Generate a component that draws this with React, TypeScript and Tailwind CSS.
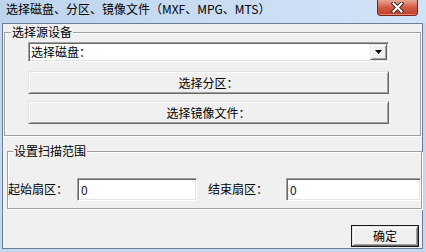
import React from "react";

const sunken =
  "border border-t-[#a0a0a0] border-l-[#a0a0a0] border-b-white border-r-white shadow-[inset_1px_1px_0_#696969,inset_-1px_-1px_0_#e3e3e3] bg-white";
const raised =
  "border border-t-[#e3e3e3] border-l-[#e3e3e3] border-b-[#696969] border-r-[#696969] shadow-[inset_1px_1px_0_#ffffff,inset_-1px_-1px_0_#a0a0a0] bg-[#f0f0f0]";

function CloseButton() {
  return (
    <div className="mr-[8px] w-[41px] h-[16px] rounded-b-[4px] border border-t-0 border-[#7a2418] bg-linear-to-b from-[#e7a595] via-[#d15a40] to-[#c0402a] shadow-[inset_0_-1px_0_#e08a70] flex items-center justify-center">
      <svg width="13" height="11" viewBox="0 0 13 11" className="-mt-[1px]">
        <path d="M2.5 1.5 L10.5 9.5 M10.5 1.5 L2.5 9.5" stroke="#3b2b2b" strokeWidth="4" strokeLinecap="square" />
        <path d="M2.5 1.5 L10.5 9.5 M10.5 1.5 L2.5 9.5" stroke="#ffffff" strokeWidth="2" strokeLinecap="square" />
      </svg>
    </div>
  );
}

export default function App() {
  return (
    <div className="w-[426px] h-[252px] overflow-hidden flex flex-col bg-[#c4d8ef] text-[12px] leading-[14px] text-black font-['Noto_Sans_CJK_SC','Microsoft_YaHei',sans-serif]">
      {/* Title bar */}
      <div className="h-[23px] shrink-0 flex items-start justify-between bg-linear-to-r from-[#bed4ee] to-[#d2e3f6]">
        <div className="pl-[6px] pt-[2px] whitespace-nowrap">选择磁盘、分区、镜像文件（MXF、MPG、MTS）</div>
        <CloseButton />
      </div>

      {/* Client area */}
      <div className="flex-1 ml-[2px] mr-[3px] mb-[3px] border border-[#6c7d94] bg-[#f0f0f0] flex flex-col">
        {/* Group 1 */}
        <fieldset className="ml-[1px] mt-[1px] w-[417px] border border-[#a0a0a0] shadow-[inset_1px_1px_0_#ffffff,1px_1px_0_#ffffff]">
          <legend className="ml-[6px] px-[1px] bg-[#f0f0f0] leading-[14px]">选择源设备</legend>
          <div className="pl-[23px] pt-[3px] pb-[11px] flex flex-col">
            <div className={`w-[361px] h-[20px] flex items-center ${sunken}`}>
              <span className="flex-1 pl-[2px] whitespace-nowrap">选择磁盘：</span>
              <div className={`w-[17px] h-[16px] mr-[1px] flex items-center justify-center ${raised}`}>
                <svg width="7" height="4" viewBox="0 0 7 4">
                  <path d="M0 0 H7 L3.5 4 Z" fill="#000" />
                </svg>
              </div>
            </div>
            <div className={`mt-[9px] w-[361px] h-[23px] flex items-center justify-center ${raised}`}>
              选择分区：
            </div>
            <div className={`mt-[7px] w-[361px] h-[23px] flex items-center justify-center ${raised}`}>
              选择镜像文件：
            </div>
          </div>
        </fieldset>

        {/* Group 2 */}
        <fieldset className="ml-[4px] mt-[8px] w-[414px] border border-[#a0a0a0] shadow-[inset_1px_1px_0_#ffffff,1px_1px_0_#ffffff]">
          <legend className="ml-[5px] px-[1px] bg-[#f0f0f0] leading-[14px]">设置扫描范围</legend>
          <div className="pt-[20px] pb-[7px] flex items-center">
            <span className="w-[69px] -mt-[2px] whitespace-nowrap">起始扇区：</span>
            <div className={`w-[120px] h-[23px] flex items-center pl-[3px] text-[#10103a] ${sunken}`}>0</div>
            <span className="ml-[11px] w-[78px] -mt-[2px] whitespace-nowrap">结束扇区：</span>
            <div className={`w-[135px] h-[23px] flex items-center pl-[3px] text-[#10103a] ${sunken}`}>0</div>
          </div>
        </fieldset>

        {/* OK button */}
        <div className="mt-[16px] self-end mr-[3px] w-[68px] h-[22px] border border-[#1a1a1a] flex">
          <div className={`flex-1 flex items-center justify-center ${raised}`}>确定</div>
        </div>
      </div>
    </div>
  );
}
